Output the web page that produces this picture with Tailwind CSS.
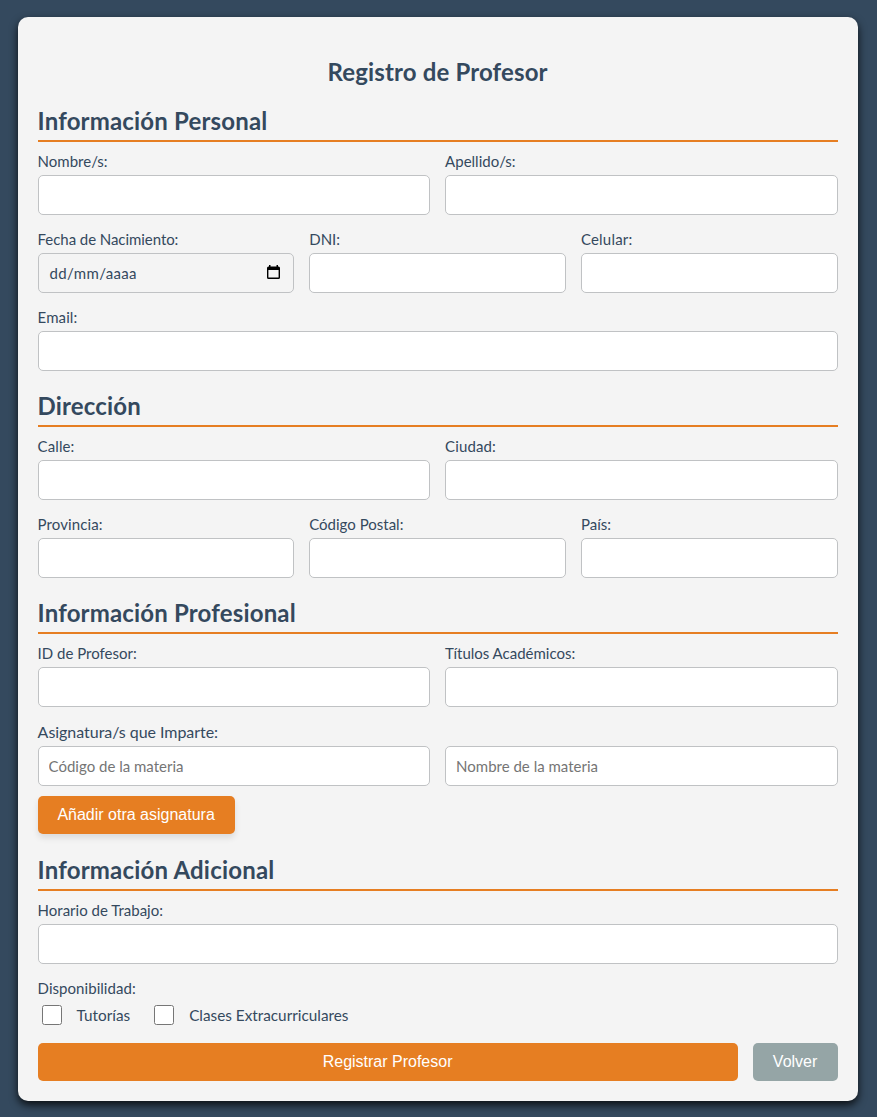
<!DOCTYPE html>
<html lang="es">
<head>
<meta charset="utf-8">
<title>Registro de Profesor</title>
<script src="https://cdn.jsdelivr.net/npm/@tailwindcss/browser@4"></script>
</head>
<body class="h-[1117px] overflow-hidden bg-[#34495e] pt-[17px] pl-[17.6px] font-['Lato',sans-serif] text-[15px] leading-[18px] text-[#34495e]">
<form class="h-[1084px] w-[840px] rounded-[10px] bg-[#f4f4f4] px-5 pt-[40px] shadow-[0_4px_8px_rgba(0,0,0,0.8)]">
  <h1 class="text-center text-2xl leading-[30px] font-bold tracking-[0.14px]">Registro de Profesor</h1>

  <h2 class="mt-[15px] h-[40px] border-b-2 border-[#e67e22] pt-[4px] text-2xl leading-[30px] font-bold tracking-[0.17px]">Información Personal</h2>
  <div class="mt-[10px] grid grid-cols-2 gap-x-[15px]">
    <label class="block">Nombre/s:<input class="mt-[5px] block h-[40px] w-full rounded-[5px] border border-[#c0c2c4] bg-white px-[10px]"></label>
    <label class="block">Apellido/s:<input class="mt-[5px] block h-[40px] w-full rounded-[5px] border border-[#c0c2c4] bg-white px-[10px]"></label>
  </div>
  <div class="mt-[15px] grid grid-cols-3 gap-x-[15px]">
    <div><span class="tracking-[-0.06px]">Fecha de Nacimiento:</span>
      <div class="mt-[5px] flex h-[40px] items-center justify-between rounded-[5px] border border-[#c0c2c4] pr-[13px] pl-[11px]"><span class="tracking-[0.35px]">dd/mm/aaaa</span>
        <svg class="mb-[3px] h-[14px] w-[13px]" viewBox="0 0 13 14"><path fill="#000" fill-rule="evenodd" d="M2 0h1.500v1.500h6V0H11v1.500h.5A1.500 1.500 0 0 1 13 3v9.500A1.500 1.500 0 0 1 11.500 14h-10A1.500 1.500 0 0 1 0 12.500V3a1.500 1.500 0 0 1 1.500-1.500H2zM1.400 5v7.600h10.200V5z"/></svg>
      </div>
    </div>
    <label class="block">DNI:<input class="mt-[5px] block h-[40px] w-full rounded-[5px] border border-[#c0c2c4] bg-white px-[10px]"></label>
    <label class="block tracking-[0.2px]">Celular:<input class="mt-[5px] block h-[40px] w-full rounded-[5px] border border-[#c0c2c4] bg-white px-[10px]"></label>
  </div>
  <label class="mt-[15px] block tracking-[0.1px]">Email:<input class="mt-[5px] block h-[40px] w-full rounded-[5px] border border-[#c0c2c4] bg-white px-[10px]"></label>

  <h2 class="mt-[16px] h-[40px] border-b-2 border-[#e67e22] pt-[4px] text-2xl leading-[30px] font-bold tracking-[0.17px]">Dirección</h2>
  <div class="mt-[10px] grid grid-cols-2 gap-x-[15px]">
    <label class="block tracking-[0.1px]">Calle:<input class="mt-[5px] block h-[40px] w-full rounded-[5px] border border-[#c0c2c4] bg-white px-[10px]"></label>
    <label class="block tracking-[0.1px]">Ciudad:<input class="mt-[5px] block h-[40px] w-full rounded-[5px] border border-[#c0c2c4] bg-white px-[10px]"></label>
  </div>
  <div class="mt-[15px] grid grid-cols-3 gap-x-[15px]">
    <label class="block tracking-[0.1px]">Provincia:<input class="mt-[5px] block h-[40px] w-full rounded-[5px] border border-[#c0c2c4] bg-white px-[10px]"></label>
    <label class="block">Código Postal:<input class="mt-[5px] block h-[40px] w-full rounded-[5px] border border-[#c0c2c4] bg-white px-[10px]"></label>
    <label class="block">País:<input class="mt-[5px] block h-[40px] w-full rounded-[5px] border border-[#c0c2c4] bg-white px-[10px]"></label>
  </div>

  <h2 class="mt-[16px] h-[40px] border-b-2 border-[#e67e22] pt-[4px] text-2xl leading-[30px] font-bold tracking-[0.17px]">Información Profesional</h2>
  <div class="mt-[10px] grid grid-cols-2 gap-x-[15px]">
    <label class="block">ID de Profesor:<input class="mt-[5px] block h-[40px] w-full rounded-[5px] border border-[#c0c2c4] bg-white px-[10px]"></label>
    <label class="block">Títulos Académicos:<input class="mt-[5px] block h-[40px] w-full rounded-[5px] border border-[#c0c2c4] bg-white px-[10px]"></label>
  </div>
  <div class="mt-[16px] text-base leading-[18px] tracking-[-0.04px]">Asignatura/s que Imparte:</div>
  <div class="mt-[5px] grid grid-cols-2 gap-x-[15px]">
    <input placeholder="Código de la materia" class="block h-[40px] w-full rounded-[5px] border border-[#c0c2c4] bg-white px-[10px] placeholder:text-[#757575]">
    <input placeholder="Nombre de la materia" class="block h-[40px] w-full rounded-[5px] border border-[#c0c2c4] bg-white px-[10px] placeholder:text-[#757575]">
  </div>
  <button type="button" class="mt-[10px] block h-[38px] w-[197px] rounded-[5px] bg-[#e67e22] font-['Liberation_Sans',sans-serif] text-base text-white shadow-[0_4px_6px_rgba(0,0,0,0.1)]">Añadir otra asignatura</button>

  <h2 class="mt-[17px] h-[40px] border-b-2 border-[#e67e22] pt-[4px] text-2xl leading-[30px] font-bold tracking-[0.19px]">Información Adicional</h2>
  <label class="mt-[10px] block">Horario de Trabajo:<input class="mt-[5px] block h-[40px] w-full rounded-[5px] border border-[#c0c2c4] bg-white px-[10px]"></label>
  <div class="mt-[15px] tracking-[0.05px]">Disponibilidad:</div>
  <div class="mt-[8px] flex h-5 items-center text-[15.3px]">
    <input type="checkbox" class="ml-1 h-5 w-5"><span class="ml-[15px]">Tutorías</span>
    <input type="checkbox" class="ml-[24px] h-5 w-5"><span class="ml-[15px]">Clases Extracurriculares</span>
  </div>
  <div class="mt-[18px] flex gap-[15px] font-['Liberation_Sans',sans-serif] text-base text-white">
    <button type="button" class="h-[38px] w-[700px] rounded-[5px] bg-[#e67e22]">Registrar Profesor</button>
    <button type="button" class="h-[38px] w-[85px] rounded-[5px] bg-[#95a5a6]">Volver</button>
  </div>
</form>
</body>
</html>
